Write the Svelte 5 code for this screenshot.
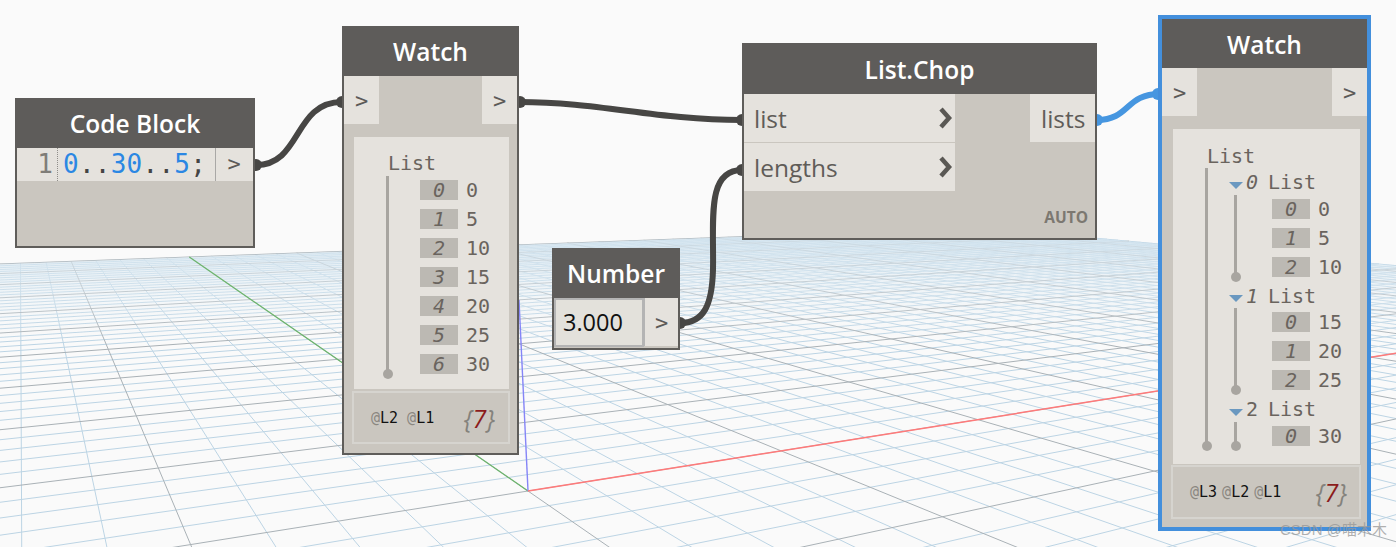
<script>
  const O = [528, 491], VX = [2550, 170], VY = [20, 140];
  const A = 0.143 / 5, B = 0.2 / 5, N = 50, UMAX = 53;
  function w(u, v) { return A * u + B * v + 1; }
  function project(u, v) {
    const k = w(u, v);
    return [
      ((A * u * VX[0] + B * v * VY[0] + O[0]) / k).toFixed(1),
      ((A * u * VX[1] + B * v * VY[1] + O[1]) / k).toFixed(1)
    ];
  }
  function seg(u0, v0, u1, v1) {
    const min = 0.04;
    let w0 = w(u0, v0), w1 = w(u1, v1);
    if (w0 < min && w1 < min) return '';
    if (w0 < min) { const t = (min - w0) / (w1 - w0); u0 += (u1 - u0) * t; v0 += (v1 - v0) * t; }
    if (w1 < min) { const t = (min - w1) / (w0 - w1); u1 += (u0 - u1) * t; v1 += (v0 - v1) * t; }
    const p = project(u0, v0), q = project(u1, v1);
    return `M${p[0]} ${p[1]}L${q[0]} ${q[1]}`;
  }
  let minor = '', major = '';
  for (let i = -N; i <= N; i++) {
    const d = seg(-N, i, UMAX, i);
    if (i % 5 === 0) major += d; else minor += d;
  }
  for (let i = -N; i <= UMAX; i++) {
    const d = seg(i, -N, i, N);
    if (i % 5 === 0) major += d; else minor += d;
  }
  const red = seg(0, 0, UMAX, 0), green = seg(0, 0, 0, N);
  const washPts = [project(UMAX, 50), project(-22, 50), project(-22, 0), project(UMAX, 0)]
    .map((p) => p.join(',')).join(' ');
  const flat = [0, 5, 10, 15, 20, 25, 30];
  const groups = [
    { i: 0, italic: true, vals: [0, 5, 10] },
    { i: 1, italic: true, vals: [15, 20, 25] },
    { i: 2, italic: false, vals: [30] }
  ];
</script>

{#snippet rows(vals)}
  <div class="rows">
    {#each vals as v, i}
      <div class="row"><span class="idx">{i}</span><span class="val">{v}</span></div>
    {/each}
  </div>
{/snippet}

{#snippet footer(levels)}
  <div class="foot">
    <div class="levels">
      {#each levels as l}<span class="lvl"><i>@</i>{l}</span>{/each}
    </div>
    <div class="count"><i>&#123;</i><b>7</b><i>&#125;</i></div>
  </div>
{/snippet}

{#snippet ports()}
  <div class="ports">
    <div class="port">&gt;</div>
    <div class="port">&gt;</div>
  </div>
{/snippet}

<div class="canvas">
  <svg class="grid" width="1396" height="547">
    <defs>
      <linearGradient id="wash" gradientUnits="userSpaceOnUse" x1="0" y1="232" x2="0" y2="345">
        <stop offset="0" stop-color="#d4e5f0" stop-opacity="0.85" />
        <stop offset="0.45" stop-color="#e2edf4" stop-opacity="0.5" />
        <stop offset="1" stop-color="#f4f7f9" stop-opacity="0" />
      </linearGradient>
    </defs>
    <path d={minor} class="minor" />
    <path d={major} class="major" />
    <polygon points={washPts} fill="url(#wash)" />
    <path d={green} class="ax-green" />
    <path d="M528 491L519 300" class="ax-blue" />
    <path d={red} class="ax-red" />
  </svg>

  <svg class="wires" width="1396" height="547">
    <g class="dark">
      <path d="M256 165C302 165 293 102 342 102" />
      <path d="M519 102C600 102 655 120 742 120" />
      <path d="M680 323C704 323 712 305 713 270C714 220 706 170 742 170" />
      <circle cx="256" cy="165" r="6" />
      <circle cx="342" cy="102" r="6" />
      <circle cx="520" cy="102" r="6" />
      <circle cx="742" cy="120" r="6" />
      <circle cx="742" cy="170" r="6" />
      <circle cx="680" cy="323" r="6" />
    </g>
    <g class="live">
      <path d="M1097 120C1130 120 1125 94 1160 94" />
      <circle cx="1097" cy="120" r="6" />
      <circle cx="1158" cy="94" r="6" />
    </g>
  </svg>

  <section class="node code">
    <header>Code Block</header>
    <div class="code-row">
      <div class="gutter">1</div>
      <div class="src"><span class="n">0</span>..<span class="n">30</span>..<span class="n">5</span>;</div>
      <div class="port out">&gt;</div>
    </div>
  </section>

  <section class="node watch1">
    <header>Watch</header>
    {@render ports()}
    <div class="panel">
      <div class="label">List</div>
      <div class="branch">
        <div class="rail"></div>
        {@render rows(flat)}
      </div>
    </div>
    {@render footer(['L2', 'L1'])}
  </section>

  <section class="node number">
    <header>Number</header>
    <div class="num-row">
      <div class="input">3.000</div>
      <div class="port out">&gt;</div>
    </div>
  </section>

  <section class="node chop">
    <header>List.Chop</header>
    <div class="chop-body">
      <div class="inputs">
        <div class="in"><span>list</span>
          <svg width="14" height="24" viewBox="0 0 14 24"><path d="M2 3L10 12L2 21" /></svg>
        </div>
        <div class="in"><span>lengths</span>
          <svg width="14" height="24" viewBox="0 0 14 24"><path d="M2 3L10 12L2 21" /></svg>
        </div>
      </div>
      <div class="lists">lists</div>
    </div>
    <div class="auto">AUTO</div>
  </section>

  <section class="node watch2">
    <header>Watch</header>
    {@render ports()}
    <div class="panel">
      <div class="label">List</div>
      <div class="branch">
        <div class="rail"></div>
        <div class="groups">
          {#each groups as g}
            <div class="group">
              <div class="head">
                <span class="tri"></span>
                <span class="gi" class:up={!g.italic}>{g.i}</span>
                <span class="gl">List</span>
              </div>
              <div class="branch sub">
                <div class="rail"></div>
                {@render rows(g.vals)}
              </div>
            </div>
          {/each}
        </div>
      </div>
    </div>
    {@render footer(['L3', 'L2', 'L1'])}
  </section>

  <div class="mark">CSDN @喵木木</div>
</div>

<style>
  :global(body) { margin: 0; background: #fafafa; }
  .canvas {
    position: relative;
    width: 1396px;
    height: 547px;
    overflow: hidden;
    background: #fafafa;
    font-family: "Open Sans", "Liberation Sans", sans-serif;
  }
  .grid, .wires { position: absolute; left: 0; top: 0; }
  .grid { filter: blur(0.5px); }
  .grid path { fill: none; }
  .minor { stroke: #bcd4e4; stroke-width: 1; }
  .major { stroke: #a9b1b6; stroke-width: 1; }
  .ax-green { stroke: #6db56d; stroke-width: 1.3; }
  .ax-blue { stroke: #8585f7; stroke-width: 1.4; }
  .ax-red { stroke: #ff7a7a; stroke-width: 1.5; }
  .wires path { fill: none; stroke-width: 6; }
  .dark path { stroke: #474644; }
  .dark circle { fill: #474644; }
  .live path { stroke: #4696e0; }
  .live circle { fill: #4696e0; }

  .node {
    position: absolute;
    box-sizing: border-box;
    background: #cac6bf;
    border: 2px solid #5f5d5a;
    border-top: 0;
    display: flex;
    flex-direction: column;
  }
  header {
    margin: 0 -2px;
    background: #5e5c5a;
    color: #fff;
    font-weight: 600;
    font-size: 24.5px;
    text-align: center;
    flex: none;
    box-sizing: border-box;
    padding-top: 1px;
  }
  .port {
    background: #e5e2dd;
    color: #5c5a58;
    font-family: "DejaVu Sans Mono", monospace;
    font-size: 22px;
    display: flex;
    align-items: center;
    justify-content: center;
    box-sizing: border-box;
  }

  .code { left: 15px; top: 98px; width: 240px; height: 150px; }
  .code header { height: 50px; line-height: 50px; }
  .code-row { display: flex; height: 33px; background: #e5e2dd; }
  .gutter {
    width: 41px;
    box-sizing: border-box;
    padding-right: 4px;
    text-align: right;
    border-right: 1px dotted #8f8d89;
    color: #7f7d78;
    font: 26px/33px "DejaVu Sans Mono", monospace;
  }
  .src {
    width: 158px;
    box-sizing: border-box;
    padding-left: 5px;
    border-right: 1px solid #a9a8a6;
    font: 26px/33px "DejaVu Sans Mono", monospace;
    letter-spacing: 0.25px;
    color: #444;
    white-space: pre;
  }
  .n { color: #2b87e3; }
  .code .port { width: 36px; height: 30px; }

  .ports { display: flex; justify-content: space-between; height: 48px; flex: none; }
  .ports .port { width: 35px; }

  .panel { background: #e5e2dd; flex: none; box-sizing: border-box; }
  .label, .gl, .gi, .idx, .val {
    font: 20px/20px "DejaVu Sans Mono", monospace;
    color: #6a645e;
  }
  .branch { display: flex; align-items: stretch; }
  .rail { position: relative; width: 3px; background: #a8a5a0; flex: none; }
  .rail::after {
    content: "";
    position: absolute;
    left: -3.5px;
    bottom: -5px;
    width: 10px;
    height: 10px;
    border-radius: 50%;
    background: #a8a5a0;
  }
  .rows { display: flex; flex-direction: column; gap: 9px; padding-top: 4px; }
  .row { display: flex; height: 20px; }
  .idx {
    width: 38px;
    background: #bcb9b3;
    text-align: center;
    font-style: italic;
  }
  .val { margin-left: 8px; }

  .watch1 { left: 342px; top: 26px; width: 177px; height: 429px; }
  .watch1 header { height: 50px; line-height: 50px; }
  .watch1 .panel {
    margin: 13px 8px 0 10px;
    height: 252px;
    padding: 16px 0 0 32px;
  }
  .watch1 .panel .label { margin: 0 0 3px 2px; }
  .watch1 .rows { margin-left: 31px; }
  .watch1 .foot { margin: 2px 7px 0 8px; height: 53px; }

  .foot {
    box-sizing: border-box;
    border: 2px solid #d6d4cf;
    display: flex;
    justify-content: space-between;
    align-items: center;
    padding: 0 13px 0 17px;
    flex: none;
  }
  .levels { display: flex; gap: 9px; font: 15px/20px "DejaVu Sans Mono", monospace; color: #111; }
  .lvl i { font-style: normal; color: #8a8781; }
  .count { font-size: 25px; line-height: 32px; font-style: italic; white-space: nowrap; }
  .count i { color: #84827c; }
  .count b { font-weight: 400; color: #8c1c1c; }

  .number { left: 552px; top: 248px; width: 128px; height: 102px; }
  .number header { height: 50px; line-height: 50px; }
  .num-row { display: flex; height: 49px; }
  .input {
    width: 90px;
    box-sizing: border-box;
    border: 2px solid #b4b4b4;
    background: #e3e1db;
    padding-left: 7px;
    font-size: 23.5px;
    line-height: 44px;
    color: #111;
  }
  .number .port { width: 34px; height: 48px; border-left: 1px solid #b4b4b4; }

  .chop { left: 742px; top: 43px; width: 355px; height: 197px; }
  .chop header { height: 51px; line-height: 51px; }
  .chop-body { display: flex; justify-content: space-between; align-items: flex-start; }
  .inputs { width: 211px; display: flex; flex-direction: column; gap: 1px; }
  .in, .lists {
    height: 48px;
    background: #e5e2dd;
    color: #5f5c58;
    font-size: 24.5px;
    line-height: 48px;
  }
  .in {
    display: flex;
    align-items: center;
    justify-content: space-between;
    padding: 0 2px 0 10px;
  }
  .in span { position: relative; top: 1px; }
  .in svg path { fill: none; stroke: #5a5854; stroke-width: 4.5; }
  .lists { width: 65px; box-sizing: border-box; padding: 1px 0 0 11px; }
  .auto {
    margin: 16px 7px 0 0;
    text-align: right;
    font-size: 15.5px;
    line-height: 20px;
    font-weight: 700;
    color: #7c7871;
  }

  .watch2 {
    left: 1158px;
    top: 15px;
    width: 213px;
    height: 516px;
    border: 4px solid #438fdc;
  }
  .watch2 header { margin: 0; height: 49px; line-height: 49px; }
  .watch2 .panel {
    margin: 13px 7px 0 11px;
    height: 335px;
    padding: 17px 0 0 32px;
  }
  .watch2 .panel > .label { margin: 0 0 2px 2px; }
  .groups { display: flex; flex-direction: column; gap: 9px; padding-top: 4px; }
  .head { display: flex; align-items: center; height: 20px; margin-left: 21px; }
  .tri {
    width: 0;
    height: 0;
    border-left: 7px solid transparent;
    border-right: 7px solid transparent;
    border-top: 7px solid #6a98c0;
    margin: 6px 3px 0 0;
  }
  .gi { font-style: italic; width: 12px; }
  .gi.up { font-style: normal; }
  .gl { margin-left: 10px; }
  .sub { margin: 2.5px 0 0 26px; }
  .sub .rows { margin-left: 35px; }
  .watch2 .foot { margin: 1px 6px 0 9px; height: 54px; }
  .watch2 .foot { padding-left: 17px; padding-right: 12px; }
  .watch2 .levels { gap: 5px; }

  .mark {
    position: absolute;
    left: 1280px;
    top: 520px;
    font: 15px/20px "Liberation Sans", "Noto Sans CJK SC", sans-serif;
    color: rgba(150, 150, 150, 0.75);
    white-space: nowrap;
  }
</style>
